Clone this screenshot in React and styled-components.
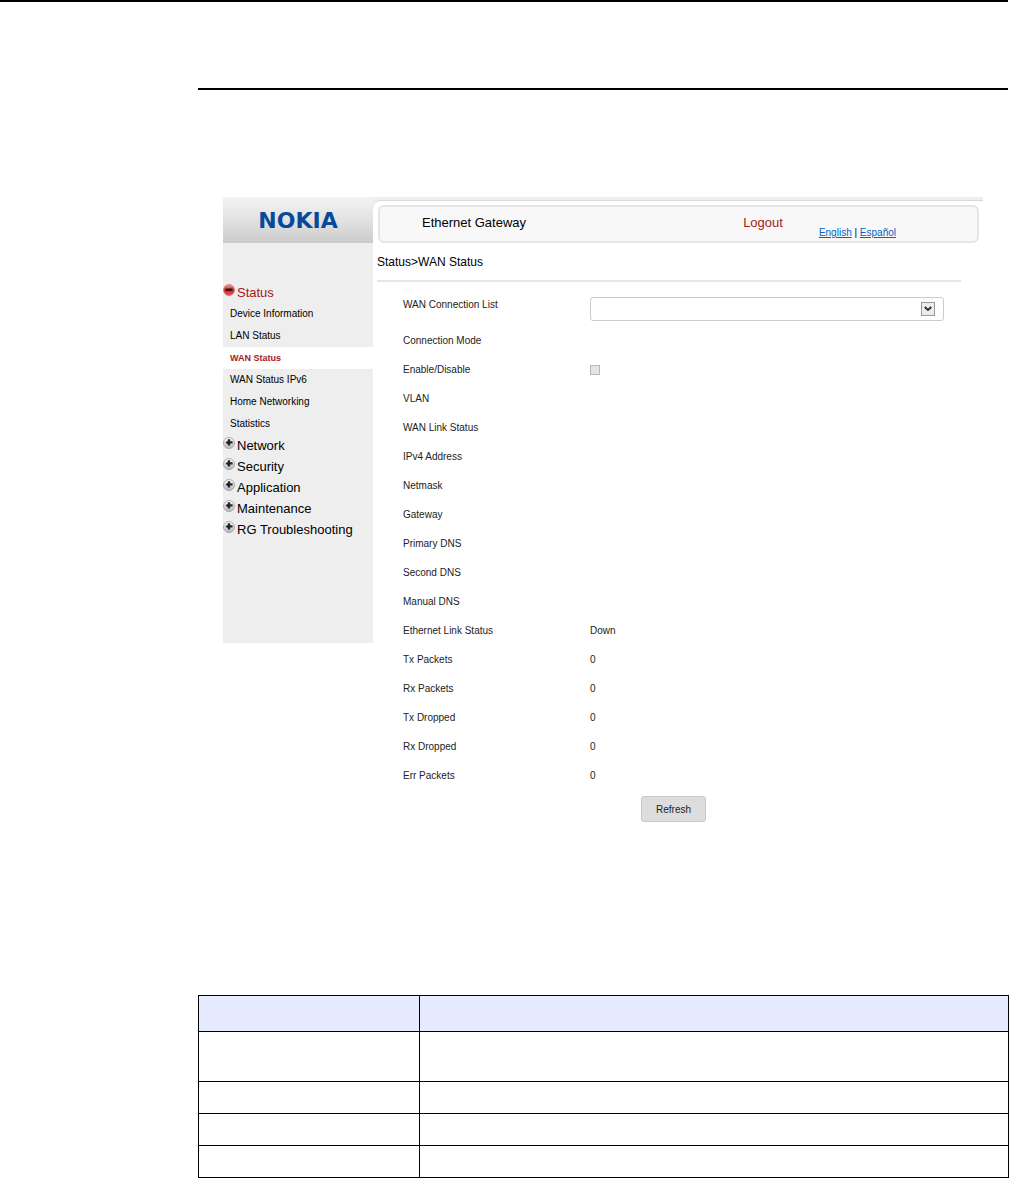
import React from 'react'
import styled, { createGlobalStyle } from 'styled-components'

const submenu = [
  'Device Information',
  'LAN Status',
  'WAN Status',
  'WAN Status IPv6',
  'Home Networking',
  'Statistics',
]

const sections = [
  'Network',
  'Security',
  'Application',
  'Maintenance',
  'RG Troubleshooting',
]

const addressRows = [
  'VLAN',
  'WAN Link Status',
  'IPv4 Address',
  'Netmask',
  'Gateway',
  'Primary DNS',
  'Second DNS',
  'Manual DNS',
]

const counterRows = [
  ['Ethernet Link Status', 'Down'],
  ['Tx Packets', '0'],
  ['Rx Packets', '0'],
  ['Tx Dropped', '0'],
  ['Rx Dropped', '0'],
  ['Err Packets', '0'],
]

const tableRows = [50, 32, 32, 32]

const BallIcon = ({ open }) => (
  <svg width='12' height='12' viewBox='0 0 12 12' aria-hidden='true'>
    <defs>
      <linearGradient id={open ? 'ball-red' : 'ball-grey'} x1='0' y1='0' x2='0' y2='1'>
        <stop offset='0' stopColor={open ? '#e9a3a3' : '#ffffff'} />
        <stop offset='0.5' stopColor={open ? '#d92a2a' : '#dcdce0'} />
        <stop offset='1' stopColor={open ? '#f04a4a' : '#b4b4ba'} />
      </linearGradient>
    </defs>
    <circle
      cx='6'
      cy='6'
      r='5.5'
      fill={open ? 'url(#ball-red)' : 'url(#ball-grey)'}
      stroke={open ? '#c98080' : '#9c9ca2'}
      strokeWidth='0.8'
    />
    {open ? (
      <rect x='2.5' y='4.5' width='7' height='2.6' fill='#3a1416' />
    ) : (
      <path d='M2.4 5.4 L4.8 3.8 V2.2 H7.2 V4.2 H9.6 V6.6 H7.2 V8.6 H4.8 V7.2 Z' fill='#26262c' />
    )}
  </svg>
)

const App = () => {
  return (
    <>
      <GlobalStyle />
      <Page>
        <Rule />
        <SectionRule />

        <Panel>
          <Header>
            <Brand>NOKIA</Brand>
            <HeaderMain>
              <TitleBar>
                <Title>Ethernet Gateway</Title>
                <Logout href='#logout'>Logout</Logout>
                <Languages>
                  <a href='#en'>English</a> | <a href='#es'>Español</a>
                </Languages>
              </TitleBar>
            </HeaderMain>
          </Header>

          <Body>
            <Sidebar>
              <MenuHeading href='#status' $active>
                <BallIcon open />
                <span>Status</span>
              </MenuHeading>
              {submenu.map((item) => (
                <MenuItem href='#status' key={item} $active={item === 'WAN Status'}>
                  {item}
                </MenuItem>
              ))}
              {sections.map((item) => (
                <MenuHeading href='#section' key={item}>
                  <BallIcon />
                  <span>{item}</span>
                </MenuHeading>
              ))}
            </Sidebar>

            <Content>
              <Breadcrumb>Status&gt;WAN Status</Breadcrumb>
              <Form onSubmit={(e) => e.preventDefault()}>
                <SelectRow>
                  <label htmlFor='wan-list'>WAN Connection List</label>
                  <SelectBox>
                    <select id='wan-list' />
                    <svg width='14' height='14' viewBox='0 0 14 14' aria-hidden='true'>
                      <rect x='0.5' y='0.5' width='13' height='13' fill='#ececec' stroke='#999' />
                      <path d='M3.8 5 L7 8 L10.2 5' fill='none' stroke='#2d2a44' strokeWidth='2' />
                    </svg>
                  </SelectBox>
                </SelectRow>
                <Row>
                  <span>Connection Mode</span>
                </Row>
                <Row>
                  <label htmlFor='wan-enable'>Enable/Disable</label>
                  <Checkbox type='checkbox' id='wan-enable' disabled />
                </Row>
                {addressRows.map((name) => (
                  <Row key={name}>
                    <span>{name}</span>
                  </Row>
                ))}
                {counterRows.map(([name, value]) => (
                  <Row key={name}>
                    <span>{name}</span>
                    <span>{value}</span>
                  </Row>
                ))}
                <Refresh type='button'>Refresh</Refresh>
              </Form>
            </Content>
          </Body>
        </Panel>

        <Table>
          <thead>
            <HeadRow>
              <th />
              <th />
            </HeadRow>
          </thead>
          <tbody>
            {tableRows.map((height, i) => (
              <TableRow key={i} $height={height}>
                <td />
                <td />
              </TableRow>
            ))}
          </tbody>
        </Table>
      </Page>
    </>
  )
}

export default App

const GlobalStyle = createGlobalStyle`
  * {
    box-sizing: border-box;
  }

  body {
    margin: 0;
    background: #fff;
    color: #000;
    font-family: 'Liberation Sans', Arial, sans-serif;
    font-size: 10px;
    line-height: 16px;
  }
`

const Page = styled.div`
  display: flex;
  flex-direction: column;
`

const Rule = styled.div`
  height: 2px;
  margin-right: 1px;
  background: #000;
`

const SectionRule = styled(Rule)`
  margin: 86px 1px 0 198px;
`

const Panel = styled.div`
  margin: 107px 26px 0 223px;
`

const Header = styled.header`
  display: flex;
  height: 46px;
  background: #efefef;
`

const Brand = styled.div`
  display: flex;
  align-items: center;
  justify-content: center;
  width: 150px;
  padding-top: 2px;
  background: linear-gradient(#f3f3f3, #e2e2e2 50%, #cbcbcb);
  color: #064a9e;
  font-family: 'DejaVu Sans', Verdana, sans-serif;
  font-size: 22px;
  font-weight: bold;
`

const HeaderMain = styled.div`
  flex: 1;
  margin-top: 3px;
  padding: 4px 4px 0 5px;
  border-top: 1px solid #d9d9d9;
  border-top-left-radius: 8px;
  background: #fff;
`

const TitleBar = styled.div`
  display: flex;
  align-items: flex-start;
  height: 38px;
  padding: 8px 81px 0 42px;
  border: 2px solid #e5e5e5;
  border-radius: 6px;
  background: #f8f8f8;
  font-size: 13px;
`

const Title = styled.div`
  flex: 1;
`

const Logout = styled.a`
  color: #a5181c;
  text-decoration: none;
`

const Languages = styled.div`
  margin-left: 36px;
  padding-top: 10px;
  font-size: 10px;

  a {
    color: #0563c1;
  }
`

const Body = styled.div`
  display: flex;
  align-items: flex-start;
`

const Sidebar = styled.nav`
  display: flex;
  flex-direction: column;
  width: 150px;
  min-height: 400px;
  padding-top: 39px;
  background: #eee;
`

const MenuHeading = styled.a`
  display: flex;
  gap: 2px;
  height: 21px;
  color: ${({ $active }) => ($active ? '#a5181c' : '#000')};
  font-size: 13px;
  line-height: 22px;
  text-decoration: none;

  svg {
    margin-top: 2px;
  }
`

const MenuItem = styled.a`
  padding-left: 7px;
  background: ${({ $active }) => ($active ? '#fff' : 'transparent')};
  color: ${({ $active }) => ($active ? '#a5181c' : '#000')};
  font-size: ${({ $active }) => ($active ? '9px' : '10px')};
  font-weight: ${({ $active }) => ($active ? 'bold' : 'normal')};
  line-height: 22px;
  text-decoration: none;
`

const Content = styled.main`
  flex: 1;
  padding: 11px 22px 0 4px;
`

const Breadcrumb = styled.div`
  padding-bottom: 10px;
  border-bottom: 2px solid #e6e6e6;
  font-size: 12px;
`

const Form = styled.form`
  display: flex;
  flex-direction: column;
  padding: 15px 17px 0 26px;
  color: #222;
`

const Row = styled.div`
  display: grid;
  grid-template-columns: 187px 1fr;
  align-items: center;
  height: 29px;
`

const SelectRow = styled(Row)`
  align-items: start;
`

const SelectBox = styled.div`
  display: grid;
  align-items: center;

  select,
  svg {
    grid-area: 1 / 1;
  }

  select {
    appearance: none;
    width: 100%;
    height: 24px;
    border: 1px solid #ccc;
    border-radius: 3px;
    background: #fff;
  }

  svg {
    justify-self: end;
    margin-right: 9px;
    pointer-events: none;
  }
`

const Checkbox = styled.input`
  appearance: none;
  width: 10px;
  height: 10px;
  margin: 0;
  border: 1px solid #b8b8b8;
  background: #e4e4e4;
`

const Refresh = styled.button`
  align-self: center;
  width: 65px;
  height: 26px;
  margin-top: 6px;
  padding: 0;
  border: 1px solid #c8c8c8;
  border-radius: 3px;
  background: #ddd;
  color: #222;
  font-family: inherit;
  font-size: 10px;
`

const Table = styled.table`
  width: calc(100% - 198px);
  margin: 173px 0 0 198px;
  border-collapse: collapse;
  table-layout: fixed;

  th,
  td {
    padding: 0;
    border: 1px solid #000;
  }

  th:first-child {
    width: 221px;
  }
`

const HeadRow = styled.tr`
  height: 36px;
  background: #e6ebff;
`

const TableRow = styled.tr`
  height: ${({ $height }) => $height}px;
`
